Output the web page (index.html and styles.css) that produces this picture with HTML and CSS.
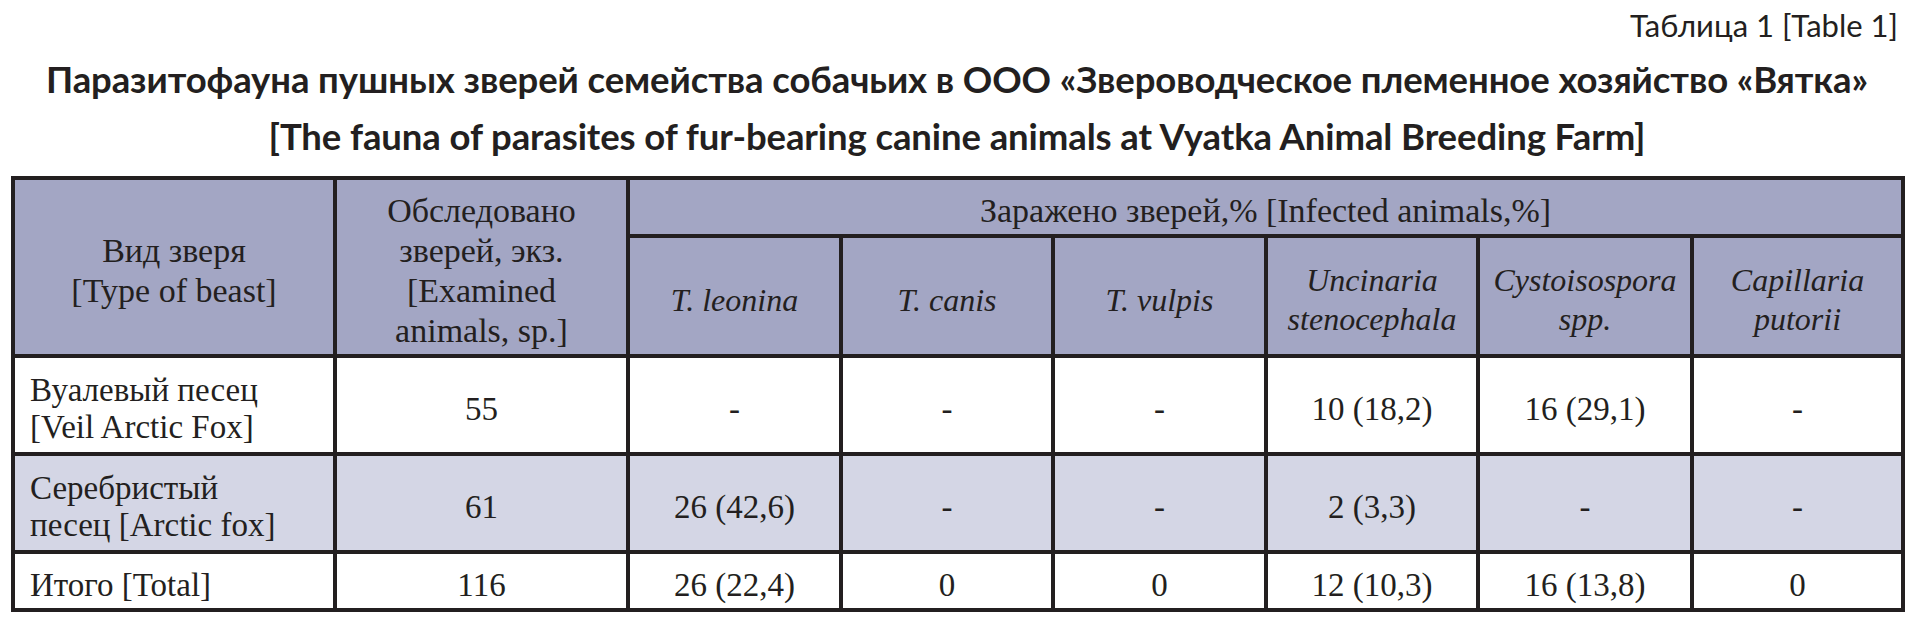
FILE: index.html
```html
<!DOCTYPE html>
<html lang="ru">
<head>
<meta charset="utf-8">
<title>Таблица 1</title>
<link rel="stylesheet" href="styles.css">
</head>
<body>
<div class="page">
  <p class="caption">Таблица 1 [Table 1]</p>
  <h1 class="title">
    <span class="title-line">Паразитофауна пушных зверей семейства собачьих в ООО «Звероводческое племенное хозяйство «Вятка»</span>
    <span class="title-line">[The fauna of parasites of fur-bearing canine animals at Vyatka Animal Breeding Farm]</span>
  </h1>
  <div class="grid">
    <div class="cell head span-rows c1">Вид зверя<br>[Type of beast]</div>
    <div class="cell head span-rows c2">Обследовано<br>зверей, экз.<br>[Examined<br>animals, sp.]</div>
    <div class="cell head span-cols">Заражено зверей,% [Infected animals,%]</div>
    <div class="cell head sub"><i>T. leonina</i></div>
    <div class="cell head sub"><i>T. canis</i></div>
    <div class="cell head sub"><i>T. vulpis</i></div>
    <div class="cell head sub"><i>Uncinaria<br>stenocephala</i></div>
    <div class="cell head sub"><i>Cystoisospora<br>spp.</i></div>
    <div class="cell head sub"><i>Capillaria<br>putorii</i></div>

    <div class="cell first">Вуалевый песец<br>[Veil Arctic Fox]</div>
    <div class="cell">55</div>
    <div class="cell">-</div>
    <div class="cell">-</div>
    <div class="cell">-</div>
    <div class="cell">10 (18,2)</div>
    <div class="cell">16 (29,1)</div>
    <div class="cell">-</div>

    <div class="cell first alt">Серебристый<br>песец [Arctic fox]</div>
    <div class="cell alt">61</div>
    <div class="cell alt">26 (42,6)</div>
    <div class="cell alt">-</div>
    <div class="cell alt">-</div>
    <div class="cell alt">2 (3,3)</div>
    <div class="cell alt">-</div>
    <div class="cell alt">-</div>

    <div class="cell first">Итого [Total]</div>
    <div class="cell">116</div>
    <div class="cell">26 (22,4)</div>
    <div class="cell">0</div>
    <div class="cell">0</div>
    <div class="cell">12 (10,3)</div>
    <div class="cell">16 (13,8)</div>
    <div class="cell">0</div>
  </div>
</div>
</body>
</html>
```

FILE: styles.css
```css
html, body {
  margin: 0;
  padding: 0;
  background: #ffffff;
}

.page {
  width: 1914px;
  color: #231f20;
}

.caption {
  margin: 0;
  padding-right: 16px;
  text-align: right;
  font-family: Lato, "Open Sans", sans-serif;
  font-size: 31px;
  line-height: 50px;
  height: 50px;
}

.title {
  margin: 1px 0 11px 0;
  font-family: Lato, "Open Sans", sans-serif;
  font-weight: 700;
  font-size: 36.5px;
  line-height: 57px;
  text-align: center;
  letter-spacing: -0.1px;
}

.title-line {
  display: block;
}

.grid {
  margin-left: 11px;
  width: 1894px;
  box-sizing: border-box;
  padding: 4px;
  gap: 4px;
  background: #231f20;
  display: grid;
  grid-template-columns: 318px 289px 209px 208px 209px 208px 210px 207px;
  grid-template-rows: 54px 116px 94px 94px 54px;
}

.cell {
  background: #ffffff;
  display: flex;
  align-items: center;
  justify-content: center;
  text-align: center;
  padding-top: 8px;
  font-family: "Liberation Serif", "Times New Roman", serif;
  font-size: 33px;
  line-height: 37px;
}

.cell i {
  font-family: "Liberation Serif", "Times New Roman", serif;
  font-style: italic;
}

.head {
  background: #a3a6c4;
  font-size: 34px;
  line-height: 40px;
}

.sub {
  font-size: 32px;
  line-height: 39px;
}

.span-rows {
  grid-row: 1 / 3;
}

.c1 {
  grid-column: 1;
}

.c2 {
  grid-column: 2;
}

.span-cols {
  grid-column: 3 / 9;
}

.first {
  justify-content: flex-start;
  text-align: left;
  padding-left: 15px;
}

.alt {
  background: #d4d6e5;
}
```
